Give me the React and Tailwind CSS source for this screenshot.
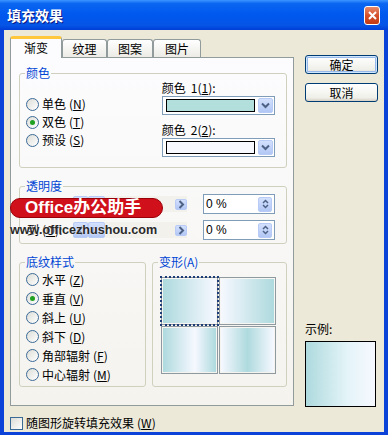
import React from 'react';

const panelBg = 'bg-[linear-gradient(180deg,#FCFCFE,#F4F3EE)]';
const xpBlueBtn = 'bg-[linear-gradient(180deg,#D3E0FD,#B2C7F5)] border border-[#B7CBF6] rounded-[2px]';

function Key({ children }) {
  return <span className="underline underline-offset-[1px]">{children}</span>;
}

function Chevron({ dir = 'down' }) {
  const d = {
    down: 'M1 1.5l3.5 3.5L8 1.5',
    right: 'M1.5 1l3.5 3.5L1.5 8',
    left: 'M5 1L1.5 4.5 5 8',
  }[dir];
  const box = dir === 'down' ? '0 0 9 7' : '0 0 7 9';
  return (
    <svg width={dir === 'down' ? 9 : 7} height={dir === 'down' ? 7 : 9} viewBox={box}>
      <path d={d} stroke="#4D6185" strokeWidth="2" fill="none" />
    </svg>
  );
}

function Radio({ checked, label, hot }) {
  return (
    <div className="flex h-[18px] items-center">
      <span className="grid h-[13px] w-[13px] place-items-center rounded-full border border-[#3C6A96] bg-[linear-gradient(135deg,#DCDCD7,#FFFFFF)]">
        {checked && <span className="h-[5px] w-[5px] rounded-full bg-[#21A121]" />}
      </span>
      <span className="ml-[3px]">{label}</span>
      <span className="ml-[3px]">
        (<Key>{hot}</Key>)
      </span>
    </div>
  );
}

function Group({ title, className, children }) {
  return (
    <fieldset className={`rounded-[3px] border border-[#D0D0BF] ${className}`}>
      <legend className="ml-[5px] px-[1px] leading-[14px] text-[#0046D5]">{title}</legend>
      {children}
    </fieldset>
  );
}

function ColorCombo({ swatch }) {
  return (
    <div className="flex h-[19px] w-[113px] items-center border border-[#7F9DB9] bg-white pl-[3px] pr-[1px]">
      <div className={`h-[13px] flex-1 border border-black ${swatch}`} />
      <div className={`ml-[3px] grid h-[15px] w-[15px] place-items-center ${xpBlueBtn}`}>
        <Chevron />
      </div>
    </div>
  );
}

function ScrollRow({ label, hot }) {
  return (
    <div className="flex h-[20px] items-center">
      <span className="w-[46px]">
        {label}
        <span className="ml-[3px]">
          (<Key>{hot}</Key>):
        </span>
      </span>
      <div className="flex h-[16px] w-[114px] items-center bg-[#F3F1EC]">
        <div className={`grid h-[16px] w-[15px] place-items-center ${xpBlueBtn}`}>
          <Chevron dir="left" />
        </div>
        <div className={`flex h-[16px] w-[17px] items-center justify-center gap-[2px] ${xpBlueBtn}`}>
          <span className="h-[6px] w-px bg-[#8CA6E0]" />
          <span className="h-[6px] w-px bg-[#8CA6E0]" />
          <span className="h-[6px] w-px bg-[#8CA6E0]" />
        </div>
        <div className="flex-1" />
        <div className={`grid h-[11px] w-[12px] place-items-center ${xpBlueBtn}`}>
          <Chevron dir="right" />
        </div>
      </div>
      <div className="ml-[16px] flex h-[20px] w-[72px] items-center border border-[#7F9DB9] bg-white pl-[2px] pr-[2px]">
        <span className="flex-1 font-['Liberation_Sans',sans-serif] text-[12px]">0 %</span>
        <div className={`flex h-[15px] w-[14px] flex-col items-center justify-center ${xpBlueBtn}`}>
          <svg width="7" height="10" viewBox="0 0 7 10">
            <path d="M1 4L3.5 1.5 6 4M1 6l2.5 2.5L6 6" stroke="#4D6185" strokeWidth="1.5" fill="none" />
          </svg>
        </div>
      </div>
    </div>
  );
}

const cells = [
  'bg-[linear-gradient(90deg,#AEDADE,#F6F8FF)]',
  'bg-[linear-gradient(90deg,#F6F8FF,#AEDADE)]',
  'bg-[linear-gradient(90deg,#AEDADE,#F6F8FF_60%,#AEDADE)]',
  'bg-[linear-gradient(90deg,#F6F8FF,#AEDADE_50%,#F6F8FF)]',
];

function XpButton({ children, primary }) {
  return (
    <button
      type="button"
      className={`h-[19px] w-[73px] rounded-[3px] border border-[#003C74] bg-[linear-gradient(180deg,#FFFFFF,#F0F0EA_80%,#D6D0C5)] leading-[17px] ${primary ? 'shadow-[inset_0_0_0_1px_#CEE7FF,inset_0_0_0_2px_#98B8EA]' : ''}`}
    >
      {children}
    </button>
  );
}

export default function App() {
  return (
    <div className="relative flex h-[435px] w-[388px] flex-col overflow-hidden bg-[#0B43D8] font-['Noto_Sans_CJK_SC',sans-serif] text-[12px] leading-[14px] text-black">
      {/* title bar */}
      <div className="flex h-[30px] items-center bg-[linear-gradient(180deg,#3D95FF_0%,#0A66F2_12%,#0058EE_50%,#0554E6_85%,#003DD7_100%)] pl-[7px] pr-[8px]">
        <span className="flex-1 text-[14px] font-bold text-white [text-shadow:1px_1px_#0A1883]">填充效果</span>
        <div className="grid h-[19px] w-[16px] place-items-center rounded-[3px] border border-white bg-[linear-gradient(180deg,#E88A6A,#D4502C_50%,#C33A12)]">
          <svg width="9" height="9" viewBox="0 0 9 9">
            <path d="M1 1l7 7M8 1L1 8" stroke="white" strokeWidth="2" />
          </svg>
        </div>
      </div>

      {/* body */}
      <div className="flex flex-1 border-x-4 border-b-[3px] border-[#0B43D8] bg-[#ECE9D8]">
        <div className="ml-[6px] mt-[6px] flex w-[284px] flex-col">
          {/* tabs */}
          <div className="flex h-[21px] items-end">
            <div className="relative z-10 -mb-px grid h-[22px] w-[52px] place-items-center rounded-t-[3px] border-x border-t-[3px] border-x-[#919B9C] border-t-[#FFC83C] bg-[#FCFCFE] pb-[2px]">
              渐变
            </div>
            {[
              ['纹理', 'w-[45px]'],
              ['图案', 'w-[46px]'],
              ['图片', 'w-[48px]'],
            ].map(([t, w]) => (
              <div
                key={t}
                className={`grid h-[18px] ${w} place-items-center rounded-t-[3px] border-x border-t border-[#919B9C] bg-[linear-gradient(180deg,#FFFFFF,#ECEBE6)]`}
              >
                {t}
              </div>
            ))}
          </div>

          {/* panel */}
          <div className={`flex h-[349px] flex-col border border-[#919B9C] ${panelBg} pl-[8px] pr-[6px]`}>
            <Group title="颜色" className="mt-[8px] h-[102px]">
              <div className="flex">
                <div className="mt-[15px] flex flex-col pl-[6px]">
                  <Radio label="单色" hot="N" />
                  <Radio label="双色" hot="T" checked />
                  <Radio label="预设" hot="S" />
                </div>
                <div className="ml-[76px] flex flex-col">
                  <span className="mt-[1px]">
                    颜色
                    <span className="ml-[5px]">
                      1(<Key>1</Key>):
                    </span>
                  </span>
                  <div className="mt-[1px]">
                    <ColorCombo swatch="bg-[#B2DEDC]" />
                  </div>
                  <span className="mt-[8px]">
                    颜色
                    <span className="ml-[5px]">
                      2(<Key>2</Key>):
                    </span>
                  </span>
                  <div className="mt-[1px]">
                    <ColorCombo swatch="bg-[#F8F8FF]" />
                  </div>
                </div>
              </div>
            </Group>

            <Group title="透明度" className="mt-[11px] h-[65px]">
              <div className="mt-[1px] flex flex-col gap-[6px] pl-[7px]">
                <ScrollRow label="从" hot="F" />
                <ScrollRow label="到" hot="O" />
              </div>
            </Group>

            <div className="mt-[11px] flex gap-[6px]">
              <Group title="底纹样式" className="h-[132px] w-[127px]">
                <div className="mt-[1px] flex flex-col pl-[6px] [&>div]:h-[19px]">
                  <Radio label="水平" hot="Z" />
                  <Radio label="垂直" hot="V" checked />
                  <Radio label="斜上" hot="U" />
                  <Radio label="斜下" hot="D" />
                  <Radio label="角部辐射" hot="F" />
                  <Radio label="中心辐射" hot="M" />
                </div>
              </Group>
              <Group title="变形(A)" className="h-[132px] w-[135px]">
                <div className="ml-[8px] mt-[8px] grid w-[115px] grid-cols-2 gap-[1px]">
                  {cells.map((c, i) => (
                    <div key={i} className="h-[48px] w-[57px] border border-[#8E9AA0] p-[1px]">
                      <div
                        className={`h-full w-full ${c} ${i === 0 ? 'outline-2 outline-dotted outline-offset-[1px] outline-[#1E3C78]' : ''}`}
                      />
                    </div>
                  ))}
                </div>
              </Group>
            </div>
          </div>

          <div className="mt-[10px] flex items-center">
            <span className="h-[13px] w-[13px] border border-[#3C6A96] bg-[linear-gradient(135deg,#DCDCD7,#FFFFFF)]" />
            <span className="ml-[3px]">
              随图形旋转填充效果
              <span className="ml-[3px]">
                (<Key>W</Key>)
              </span>
            </span>
          </div>
        </div>

        <div className="ml-[11px] flex w-[73px] flex-col">
          <div className="mt-[25px]">
            <XpButton primary>确定</XpButton>
          </div>
          <div className="mt-[9px]">
            <XpButton>取消</XpButton>
          </div>
          <span className="mt-[220px]">示例:</span>
          <div className="mt-[5px] h-[66px] w-[71px] border border-black bg-[linear-gradient(90deg,#AEDADE,#E4F4F8_60%,#F6F8FF)]" />
        </div>
      </div>

      {/* watermark */}
      <div className="absolute left-[10px] top-[198px] flex h-[20px] w-[153px] items-center rounded-full border border-[#9A0008] bg-[#D0101A] pl-[14px] font-['Liberation_Sans','Noto_Sans_CJK_SC',sans-serif] text-[17px] font-bold text-white">
        Office办公助手
      </div>
      <div className="absolute left-[10px] top-[222px] font-['Liberation_Sans',sans-serif] text-[12.6px] font-bold leading-[16px] text-[#2A2A2A] [text-shadow:0_0_2px_#FFFFFF]">
        www.officezhushou.com
      </div>
    </div>
  );
}
